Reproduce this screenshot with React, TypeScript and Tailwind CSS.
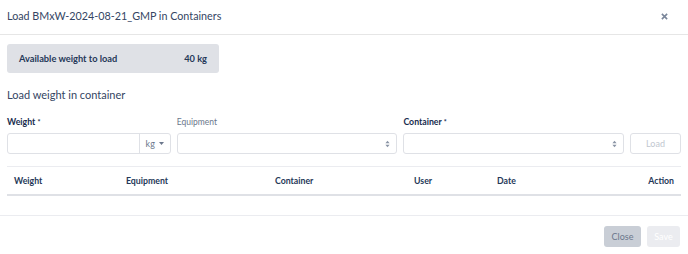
import React from "react";

const Updown = () => (
  <svg width="5" height="8" viewBox="0 0 6 9" className="text-[#8993a4]">
    <path d="M3 0.5 L5.5 3.5 H0.5 Z" fill="currentColor" />
    <path d="M3 8.5 L5.5 5.5 H0.5 Z" fill="currentColor" />
  </svg>
);

export default function App() {
  return (
    <div
      className="w-[688px] h-[254px] bg-white text-[#172b4d] overflow-hidden"
      style={{ fontFamily: "Lato, 'Open Sans', sans-serif" }}
    >
      {/* header */}
      <div className="h-[35px] border-b border-[#e6e6e6] flex items-center justify-between pl-[7px] pr-[20px]">
        <div className="text-[10.75px] text-[#344563] leading-none pb-[1px]">
          Load BMxW-2024-08-21_GMP in Containers
        </div>
        <svg width="7" height="7" viewBox="0 0 8 8" className="mb-[2px]">
          <path d="M1 1 L7 7 M7 1 L1 7" stroke="#7a869a" strokeWidth="1.8" />
        </svg>
      </div>

      {/* body */}
      <div className="px-[7px] pt-[9px]">
        <div className="w-[212px] h-[29px] rounded-[3px] bg-[#dfe1e6] flex items-center justify-between px-[12px] text-[9.25px] font-bold text-[#253858]">
          <span>Available weight to load</span>
          <span>40 kg</span>
        </div>

        <div className="mt-[15px] text-[11px] text-[#344563] leading-[14px]">
          Load weight in container
        </div>

        <div className="mt-[13px] flex gap-[6px]">
          <div className="w-[164px]">
            <div className="text-[8.75px] font-bold text-[#172b4d] h-[14px] leading-[14px]">
              Weight <span className="text-[7px] align-top">*</span>
            </div>
            <div className="mt-[4px] h-[21px] flex border border-[#dfe1e6] rounded-[3px]">
              <div className="flex-1" />
              <div className="w-[31px] border-l border-[#dfe1e6] flex items-center justify-center gap-[4px] text-[9px] text-[#6b778c]">
                <span>kg</span>
                <svg width="5" height="3" viewBox="0 0 5 3">
                  <path d="M0 0 H5 L2.5 3 Z" fill="#6b778c" />
                </svg>
              </div>
            </div>
          </div>
          <div className="w-[221px]">
            <div className="text-[8.5px] text-[#6b778c] h-[14px] leading-[14px]">Equipment</div>
            <div className="mt-[4px] h-[21px] border border-[#dfe1e6] rounded-[3px] flex items-center justify-end pr-[6px]">
              <Updown />
            </div>
          </div>
          <div className="w-[221px]">
            <div className="text-[8.75px] font-bold text-[#172b4d] h-[14px] leading-[14px]">
              Container <span className="text-[7px] align-top">*</span>
            </div>
            <div className="mt-[4px] h-[21px] border border-[#dfe1e6] rounded-[3px] flex items-center justify-end pr-[6px]">
              <Updown />
            </div>
          </div>
          <div className="w-[51px] pt-[18px]">
            <div className="h-[21px] border border-[#dfe1e6] rounded-[3px] flex items-center justify-center text-[9px] text-[#c1c7d0]">
              Load
            </div>
          </div>
        </div>

        {/* table */}
        <div className="mt-[12px] border-t border-[#ebecf0]">
          <div className="h-[29px] flex items-center px-[7px] text-[8.75px] font-bold text-[#253858] border-b-2 border-[#dfe1e6]">
            <div className="w-[112px]">Weight</div>
            <div className="w-[149px]">Equipment</div>
            <div className="w-[139px]">Container</div>
            <div className="w-[83px]">User</div>
            <div className="w-[83px]">Date</div>
            <div className="flex-1 text-right">Action</div>
          </div>
          <div className="h-[19px]" />
        </div>
      </div>

      {/* footer */}
      <div className="border-t border-[#ebecf0] flex justify-end gap-[6px] pr-[8px] pt-[10px]">
        <div className="w-[37px] h-[21px] rounded-[3px] bg-[#c9ced6] flex items-center justify-center text-[9px] text-[#6b778c]">
          Close
        </div>
        <div className="w-[33px] h-[21px] rounded-[3px] bg-[#ebecf0] flex items-center justify-center text-[9px] text-white">
          Save
        </div>
      </div>
    </div>
  );
}
